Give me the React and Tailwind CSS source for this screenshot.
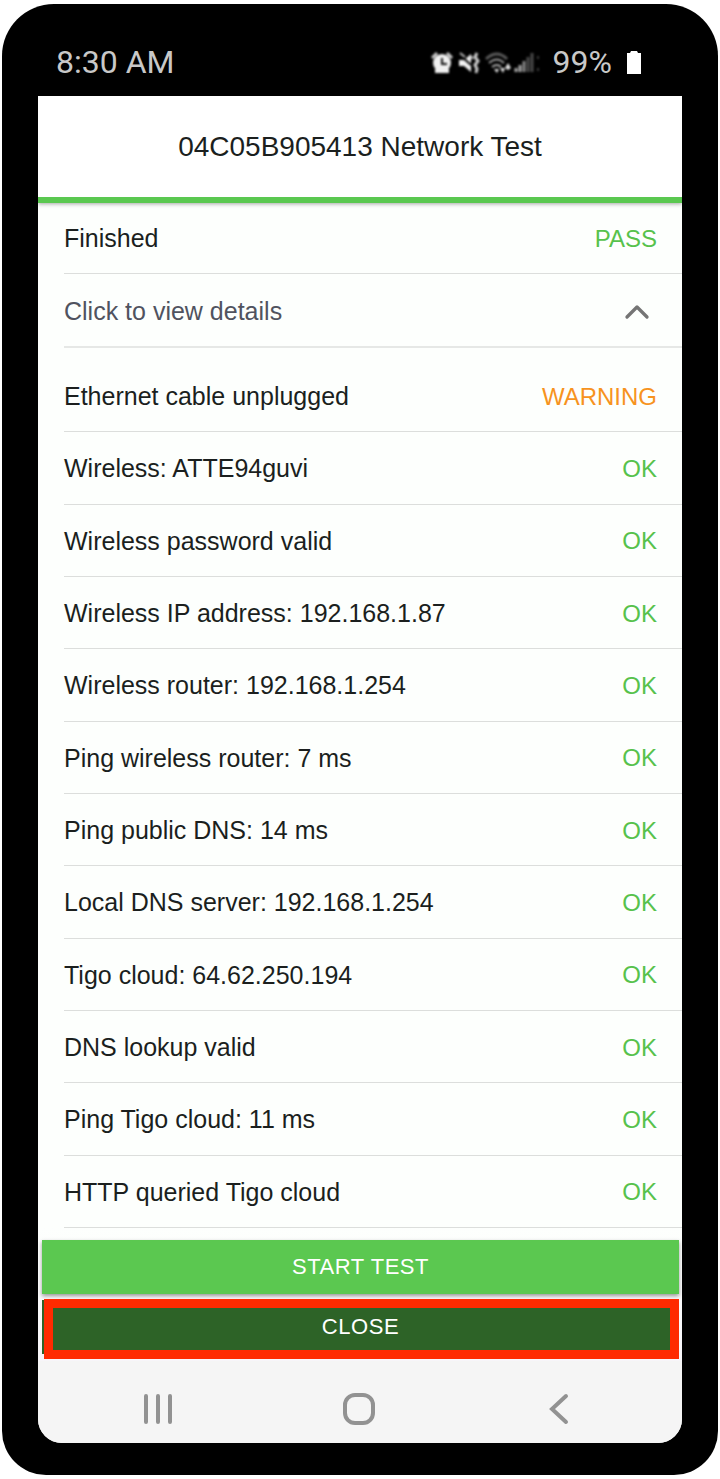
import { useState } from 'react';
import { ChevronUp } from 'lucide-react';

const results = [
  { label: 'Ethernet cable unplugged', status: 'WARNING' },
  { label: 'Wireless: ATTE94guvi', status: 'OK' },
  { label: 'Wireless password valid', status: 'OK' },
  { label: 'Wireless IP address: 192.168.1.87', status: 'OK' },
  { label: 'Wireless router: 192.168.1.254', status: 'OK' },
  { label: 'Ping wireless router: 7 ms', status: 'OK' },
  { label: 'Ping public DNS: 14 ms', status: 'OK' },
  { label: 'Local DNS server: 192.168.1.254', status: 'OK' },
  { label: 'Tigo cloud: 64.62.250.194', status: 'OK' },
  { label: 'DNS lookup valid', status: 'OK' },
  { label: 'Ping Tigo cloud: 11 ms', status: 'OK' },
  { label: 'HTTP queried Tigo cloud', status: 'OK' },
];

const statusColors = {
  OK: 'text-[#57c24c]',
  PASS: 'text-[#57c24c]',
  WARNING: 'text-[#f7931e]',
};

function Status({ value }) {
  return <span className={`text-2xl ${statusColors[value]}`}>{value}</span>;
}

function StatusBar() {
  return (
    <div className="flex h-[92px] items-center justify-between pt-6 pr-10 pl-[18px] font-['Roboto','Liberation_Sans',sans-serif] text-[32px] leading-9 text-[#c8c8c8]">
      <span>8:30 AM</span>
      <div className="flex items-center gap-[14px]">
        <svg className="blur-[1px]" width="108" height="24" viewBox="0 0 108 24" fill="none" aria-hidden="true">
          {/* alarm */}
          <path d="M1 8l5-5M21 8l-5-5" stroke="#ccc" strokeWidth="3" />
          <circle cx="11" cy="13" r="9" fill="#f0f0f0" />
          <path d="M4 19h14v4H4z" fill="#f0f0f0" />
          <path d="M11 8v6h5" stroke="#111" strokeWidth="2" />
          {/* muted, vibrate */}
          <path d="M28 10h5l7-6v18l-7-6h-5z" fill="#f4f4f4" />
          <path d="M28 4l12 11" stroke="#000" strokeWidth="2" />
          <path d="M29 3l5 4M40 6l2 3" stroke="#bbb" strokeWidth="2" />
          <path d="M46 3l-2 4 3 4-3 4 2 4-1 4" stroke="#ccc" strokeWidth="3" />
          {/* wifi */}
          <path d="M55 9q11-10 21 0" stroke="#5a5a5a" strokeWidth="3" />
          <path d="M58 13q8-7 15 0" stroke="#999" strokeWidth="2" />
          <path d="M61 17q5-4 9 0" stroke="#aaa" strokeWidth="2" />
          <path d="M63 19l3 4 2-4zM69 18h5l-2 5zM74 18l3-5 3 5-3 2z" fill="#e4e4e4" />
          {/* signal */}
          <path d="M85 22v-4M89 22v-7" stroke="#aaa" strokeWidth="3" />
          <path d="M93 22V11" stroke="#888" strokeWidth="3" />
          <path d="M97 22V7M101 22V3" stroke="#4a4a4a" strokeWidth="3" />
          <path d="M107 6v3M107 18v3" stroke="#3a3a3a" strokeWidth="2" />
        </svg>
        <span>99%</span>
        <svg width="16" height="24" viewBox="0 0 16 24" fill="#fff" aria-hidden="true">
          <path d="M1 3h3l1-2h6l1 2h3v21H1z" />
        </svg>
      </div>
    </div>
  );
}

function NavBar() {
  return (
    <nav className="flex h-[82px] items-center justify-between rounded-b-3xl bg-[#f5f5f5] pt-[14px] pr-[107px] pl-[104px] text-[#929292]">
      <button type="button" aria-label="Recent apps">
        <svg width="32" height="32" viewBox="0 0 32 32" fill="none" stroke="currentColor" strokeWidth="4" strokeLinecap="round">
          <path d="M4 3v26M16 3v26M28 3v26" />
        </svg>
      </button>
      <button type="button" aria-label="Home">
        <svg width="34" height="34" viewBox="0 0 34 34" fill="none" stroke="currentColor" strokeWidth="4">
          <rect x="3" y="3" width="28" height="28" rx="10" />
        </svg>
      </button>
      <button type="button" aria-label="Back">
        <svg width="32" height="32" viewBox="0 0 32 32" fill="none" stroke="currentColor" strokeWidth="4" strokeLinecap="round">
          <path d="M23 3L9 16l14 13" />
        </svg>
      </button>
    </nav>
  );
}

export default function App() {
  const [open, setOpen] = useState(true);

  return (
    <div className="bg-white px-[2px] pt-1 pb-[3px] font-['Liberation_Sans',Arial,sans-serif]">
      <div className="rounded-t-[52px] rounded-b-[44px] bg-black px-9 pb-8">
        <StatusBar />
        <main className="rounded-b-3xl bg-[#fdfffd] text-[#1b1f1e]">
          {/* Header */}
          <header className="flex h-[107px] items-center justify-center border-b-[6px] border-[#5ac850] bg-white shadow-[0_1px_4px_rgba(0,0,0,0.35)]">
            <h1 className="text-[28px]">04C05B905413 Network Test</h1>
          </header>

          {/* Summary */}
          <div className="pl-[26px]">
            <div className="flex h-[71px] items-center justify-between border-b border-[#dcdedc] pt-[2px] pr-[25px]">
              <span className="text-[25px]">Finished</span>
              <Status value="PASS" />
            </div>
            <button
              type="button"
              aria-expanded={open}
              onClick={() => setOpen(!open)}
              className="flex h-[74px] w-full items-center justify-between border-b-2 border-[#e6e8e6] pt-[3px] pr-[25px] text-[25px] text-[#50535f]"
            >
              Click to view details
              <ChevronUp className={open ? 'size-10' : 'size-10 rotate-180'} color="#757575" strokeWidth={2} />
            </button>
          </div>

          {/* Results */}
          {open && (
            <ul className="mt-3 grid min-h-[868px] auto-rows-fr pl-[26px]">
              {results.map((item) => (
                <li key={item.label} className="flex items-center justify-between border-b border-[#dcdedc] pt-[2px] pr-[25px]">
                  <span className="text-[25px]">{item.label}</span>
                  <Status value={item.status} />
                </li>
              ))}
            </ul>
          )}

          {/* Actions */}
          <div className="flex flex-col gap-[6px] bg-linear-to-b from-[#fdfffd] to-[#f7f5f9] pt-3 pr-[3px] pb-[7px] pl-1 text-[22px] text-white">
            <button type="button" className="h-[54px] bg-[#5bc850] pb-[2px] tracking-wide shadow-[0_2px_4px_rgba(0,0,0,0.4)]">
              START TEST
            </button>
            <div className="relative flex">
              <button type="button" className="h-[54px] flex-1 bg-[#2d6327] pb-[2px] tracking-wide">
                CLOSE
              </button>
              <span className="pointer-events-none absolute -top-px right-0 -bottom-[5px] left-[2px] border-[9px] border-[#ff2a00]" />
            </div>
          </div>

          <NavBar />
        </main>
      </div>
    </div>
  );
}
